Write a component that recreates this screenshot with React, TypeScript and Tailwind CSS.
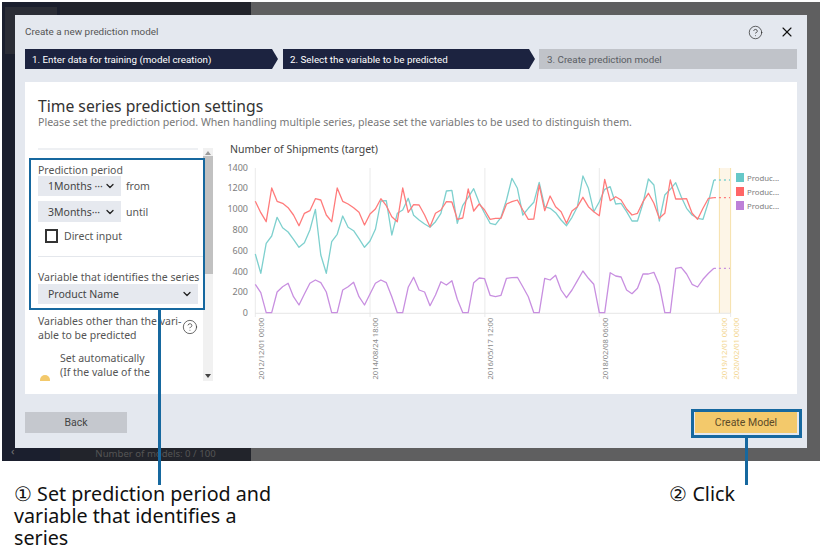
import { ChevronDown, CircleHelp, X } from "lucide-react";

const STEP = 5.46;
const X0 = 255.3;

// y values read off the reference, in 3x crop units (px = 140 + z / 3)
const teal = [
  342, 400, 310, 288, 232, 263, 276, 298, 322, 308, 270, 208, 345, 400, 305, 283, 228, 262, 272, 296, 322, 303, 268,
  183, 182, 285, 220, 210, 175, 226, 240, 252, 262, 245, 220, 153, 151, 250, 196, 172, 146, 188, 220, 250, 254, 232,
  180, 115, 145, 225, 205, 187, 127, 200, 205, 218, 240, 257, 232, 200, 108, 145, 215, 185, 148, 140, 192, 190, 215,
  243, 243, 190, 117, 135, 243, 165, 148, 128, 170, 205, 225, 235, 238, 185, 120,
];
const red = [
  184, 218, 245, 144, 184, 190, 203, 225, 257, 220, 212, 176, 180, 225, 245, 144, 184, 192, 203, 217, 255, 222, 207,
  176, 197, 230, 245, 144, 217, 194, 195, 225, 260, 220, 210, 185, 186, 238, 234, 147, 213, 192, 210, 238, 235, 235,
  192, 185, 180, 210, 238, 237, 135, 212, 168, 200, 215, 250, 213, 200, 172, 200, 215, 227, 118, 182, 170, 180, 207,
  225, 220, 185, 160, 190, 235, 220, 120, 177, 177, 176, 220, 238, 205, 175, 173,
];
const purple = [
  433, 458, 518, 518, 456, 440, 430, 470, 495, 462, 430, 420, 428, 456, 518, 518, 450, 440, 427, 470, 495, 462, 430,
  420, 428, 470, 518, 518, 442, 412, 450, 456, 497, 465, 425, 435, 422, 478, 518, 518, 428, 414, 416, 466, 470, 466,
  415, 413, 412, 440, 470, 518, 518, 415, 420, 406, 450, 473, 450, 422, 393, 415, 433, 518, 518, 398, 408, 411, 450,
  461, 445, 402, 402, 397, 435, 518, 518, 385, 382, 402, 433, 441, 418, 400, 385,
];

const series = [
  { data: teal, color: "#7ed0ce" },
  { data: red, color: "#ff7b7b" },
  { data: purple, color: "#c88fe0" },
];

const yTicks = [
  { label: "1400", y: 167.5 },
  { label: "1200", y: 188.3 },
  { label: "1000", y: 209.1 },
  { label: "800", y: 229.9 },
  { label: "600", y: 250.7 },
  { label: "400", y: 271.5 },
  { label: "200", y: 292.3 },
  { label: "0", y: 313 },
];

const xTicks = [
  { label: "2012/12/01 00:00", x: 260.6, color: "#8a8a8a" },
  { label: "2014/08/24 18:00", x: 375, color: "#8a8a8a" },
  { label: "2016/05/17 12:00", x: 489.6, color: "#8a8a8a" },
  { label: "2018/02/08 06:00", x: 604.6, color: "#8a8a8a" },
  { label: "2019/12/01 00:00", x: 724.3, color: "#f3d68f" },
  { label: "2020/02/01 00:00", x: 735.6, color: "#f3d68f" },
];

function toY(z: number) {
  return 140 + z / 3;
}

function ShipmentsChart() {
  return (
    <svg viewBox="225 158 575 226" className="block w-[575px] h-[226px]">
      <rect x={719.4} y={168} width={11} height={145} fill="#fdf5e7" />
      <line x1={719.4} y1={168} x2={719.4} y2={313} stroke="#f6e0ab" />
      <line x1={730.6} y1={168} x2={730.6} y2={313} stroke="#f6e0ab" />
      {[255.3, 370, 484.9, 599.3].map((x) => (
        <line key={x} x1={x} y1={168} x2={x} y2={317} stroke="#eaeaea" />
      ))}
      <line x1={730.6} y1={313} x2={730.6} y2={317} stroke="#eaeaea" />
      <line x1={255} y1={313.3} x2={731} y2={313.3} stroke="#e6e6e6" />
      {series.map((s) => {
        const last = s.data[s.data.length - 1];
        return (
          <g key={s.color} fill="none" stroke={s.color} strokeWidth={1.3} strokeLinejoin="round">
            <polyline points={s.data.map((z, i) => `${(X0 + i * STEP).toFixed(1)},${toY(z).toFixed(1)}`).join(" ")} />
            <line x1={X0 + 84 * STEP} y1={toY(last)} x2={730} y2={toY(last)} strokeDasharray="2 3" />
          </g>
        );
      })}
      {yTicks.map((t) => (
        <text key={t.label} x={248} y={t.y + 3} textAnchor="end" fontSize={9} fill="#7d7d7d">
          {t.label}
        </text>
      ))}
      {xTicks.map((t) => (
        <text
          key={t.label}
          x={0}
          y={0}
          transform={`translate(${t.x + 3} 379.5) rotate(-90)`}
          fontSize={7.6}
          fill={t.color}
        >
          {t.label}
        </text>
      ))}
      {[
        { y: 173, color: "#66c8c8" },
        { y: 187, color: "#ff6666" },
        { y: 201, color: "#bd80d8" },
      ].map((l) => (
        <g key={l.y}>
          <rect x={736} y={l.y} width={8} height={9} fill={l.color} />
          <text x={747} y={l.y + 7.5} fontSize={7.8} fill="#7d7d7d">
            Produc...
          </text>
        </g>
      ))}
    </svg>
  );
}

function FakeSelect({ label, className }: { label: string; className: string }) {
  return (
    <div className={`flex items-center justify-between bg-[#e6e9ef] pl-[10px] pr-[5px] text-[#444] ${className}`}>
      <span className="whitespace-nowrap">{label}</span>
      <ChevronDown size={12} strokeWidth={2.6} className="text-[#222] shrink-0" />
    </div>
  );
}

function SettingsColumn() {
  return (
    <div className="flex h-[233px] w-[192px] shrink-0 mt-[-1px]">
      <div className="w-[179px] h-full overflow-hidden pl-[13px] text-[10.5px] leading-[14px] text-[#555]">
        <div className="border-t-2 border-[#eef0f3] w-[160px] mb-[13px]" />
        <div>Prediction period</div>
        <div className="flex items-center gap-[5px] mt-[-1px]">
          <FakeSelect label="1Months ···" className="w-[83px] h-[20px]" />
          <span>from</span>
        </div>
        <div className="flex items-center gap-[5px] mt-[5px]">
          <FakeSelect label="3Months···" className="w-[83px] h-[21px]" />
          <span>until</span>
        </div>
        <div className="flex items-center gap-[6px] mt-[7px] ml-[7px]">
          <div className="w-[13px] h-[14px] border-2 border-[#333] bg-white" />
          <span>Direct input</span>
        </div>
        <div className="border-t border-[#e4e7ec] mt-[13px] mb-[13px]" />
        <div className="whitespace-nowrap">Variable that identifies the series</div>
        <FakeSelect label="Product Name" className="w-[160px] h-[20px]" />
        <div className="flex items-center justify-between w-[160px] mt-[10px]">
          <div className="w-[145px]">
            Variables other than the vari-
            <br />
            able to be predicted
          </div>
          <CircleHelp size={16} strokeWidth={1.1} className="text-[#333] mb-[2px]" />
        </div>
        <div className="flex mt-[9px]">
          <div className="w-[10px] h-[10px] rounded-full bg-[#f3c96b] mt-[24px] ml-[2px] shrink-0" />
          <div className="ml-[10px]">
            Set automatically
            <br />
            (If the value of the
          </div>
        </div>
      </div>
      <div className="w-[10px] h-full bg-[#f1f1f1] flex flex-col items-center justify-between py-[3px] ml-[-1px]">
        <div className="w-0 h-0 border-x-[3px] border-x-transparent border-b-[4px] border-b-[#9a9a9a]" />
        <div className="w-full h-[118px] bg-[#c1c1c1] mt-[1px] mb-auto" />
        <div className="w-0 h-0 border-x-[3px] border-x-transparent border-t-[4px] border-t-[#444]" />
      </div>
    </div>
  );
}

function Modal() {
  return (
    <div className="absolute left-[13px] top-[13px] w-[792px] h-[433px] bg-[#e4e8ef] px-[10px] flex flex-col">
      <div className="flex items-center justify-between h-[34px] shrink-0 font-['Roboto',sans-serif] text-[9.9px] text-[#555]">
        <span>Create a new prediction model</span>
        <div className="flex items-center gap-[16px] pr-[2px]">
          <CircleHelp size={15} strokeWidth={1.1} className="text-[#222]" />
          <X size={16} strokeWidth={1.7} className="text-[#111]" />
        </div>
      </div>
      <div className="flex h-[20px] shrink-0 font-['Roboto',sans-serif] text-[9.8px] leading-[21px]">
        <div className="w-[253px] mr-[5px] bg-[#1c2340] text-white pl-[7px] [clip-path:polygon(0_0,247px_0,100%_50%,247px_100%,0_100%)]">
          1. Enter data for training (model creation)
        </div>
        <div className="w-[252px] mr-[4px] bg-[#1c2340] text-white pl-[7px] [clip-path:polygon(0_0,246px_0,100%_50%,246px_100%,0_100%)]">
          2. Select the variable to be predicted
        </div>
        <div className="flex-1 bg-[#c0c3c9] text-[#5a5d63] pl-[8px]">3. Create prediction model</div>
      </div>
      <div className="mt-[13px] h-[312px] shrink-0 bg-white">
        <div className="pl-[13px] pt-[15px] h-[52px]">
          <h1 className="text-[15.7px] leading-[19px] font-normal text-[#333]">Time series prediction settings</h1>
          <p className="text-[10.6px] leading-[13px] text-[#777]">
            Please set the prediction period. When handling multiple series, please set the variables to be used to
            distinguish them.
          </p>
        </div>
        <div className="flex mt-[15px]">
          <SettingsColumn />
          <div className="ml-[12px] mt-[-7px]">
            <div className="text-[10.5px] leading-[14px] ml-[1px] text-[#444] h-[16px]">
              Number of Shipments (target)
            </div>
            <div className="ml-[-4px]">
              <ShipmentsChart />
            </div>
          </div>
        </div>
      </div>
      <div className="flex justify-between items-center mt-[18px] font-['Roboto',sans-serif] text-[10.5px]">
        <button className="w-[102px] h-[21px] bg-[#c5c8ce] text-[#444]">Back</button>
        <button className="w-[102px] h-[21px] bg-[#f3c96b] text-[#5b4a28]">Create Model</button>
      </div>
    </div>
  );
}

export default function App() {
  return (
    <div className="relative w-[822px] h-[549px] bg-white overflow-hidden font-['Noto_Sans',sans-serif]">
      <div className="relative mx-[2px] mt-[2px] h-[459px] flex bg-[#5f5f60]">
        <div className="w-[58px] bg-[#1b1f2e] relative">
          <div className="absolute left-[3px] top-[5px] w-[52px] h-[47px] bg-[#2b2d36]" />
          <span className="absolute left-[9px] bottom-[2px] text-[11px] text-[#777]">‹</span>
        </div>
        <div className="w-[191px] bg-[#22242b] flex items-end justify-center pb-0 text-[9.6px] text-[#555]">
          Number of models: 0 / 100
        </div>
        <Modal />
      </div>

      <div className="flex justify-between pl-[14px] pr-[87px] pt-[22px] text-[19.7px] leading-[22px] text-[#111]">
        <div className="w-[265px]">① Set prediction period and variable that identifies a series</div>
        <div>② Click</div>
      </div>

      {/* callouts */}
      <div className="absolute left-[29px] top-[158px] w-[176px] h-[152px] border-2 border-[#16689f]" />
      <div className="absolute left-[158px] top-[310px] w-[3px] h-[175px] bg-[#16689f]" />
      <div className="absolute left-[691px] top-[409px] w-[111px] h-[29px] border-[3px] border-[#16689f]" />
      <div className="absolute left-[745px] top-[438px] w-[3px] h-[47px] bg-[#16689f]" />
    </div>
  );
}
